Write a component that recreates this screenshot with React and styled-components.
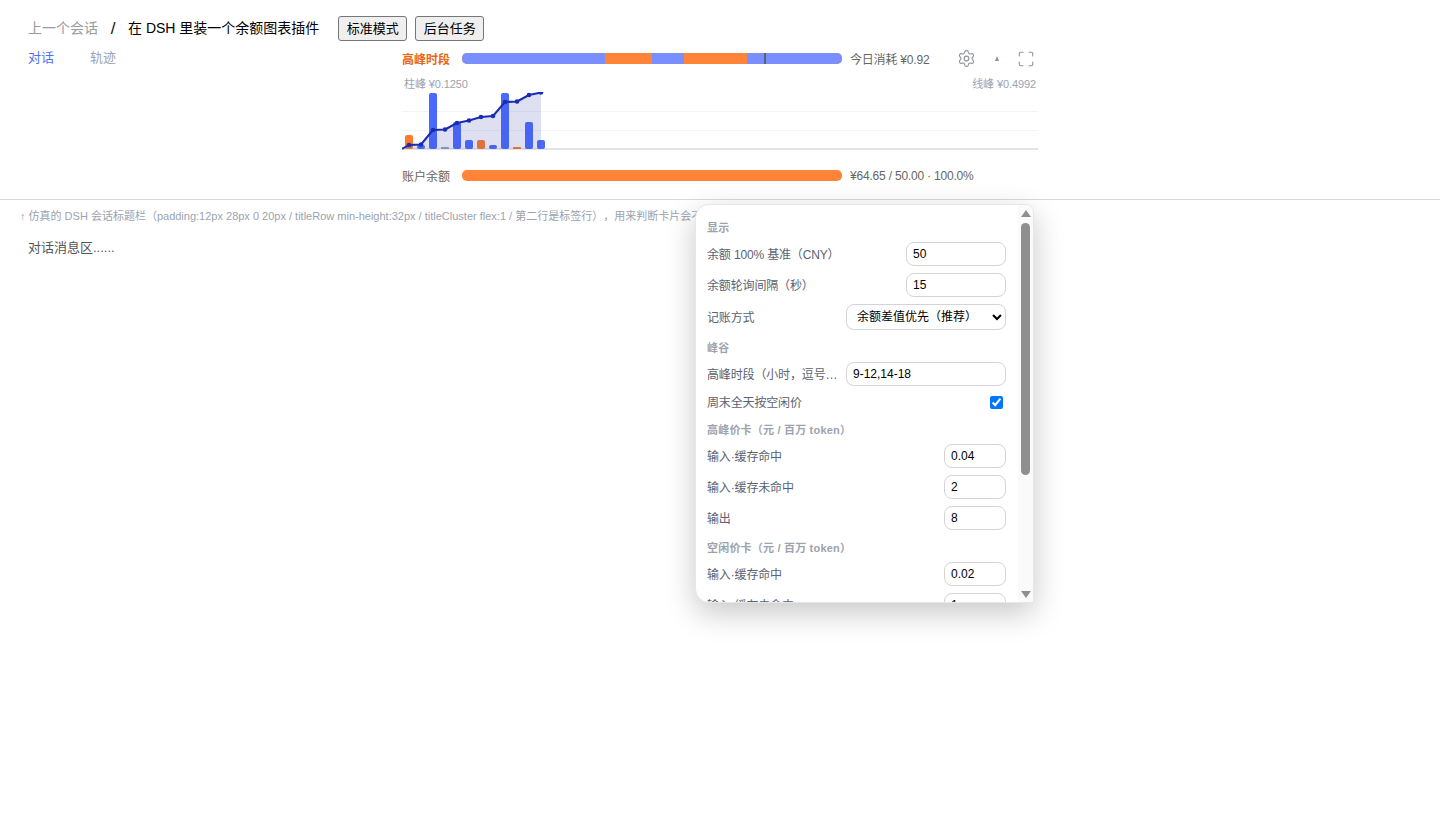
import React from 'react'
import styled, { createGlobalStyle } from 'styled-components'
import { Settings, Maximize } from 'lucide-react'

const GlobalStyle = createGlobalStyle`
  html, body, #root { margin: 0; padding: 0; min-height: 820px; background: #fff; }
  body {
    font-family: "Liberation Sans", "Noto Sans CJK SC", sans-serif;
    color: #444;
    text-spacing-trim: space-all;
  }
`

const Header = styled.header`
  padding: 16px 0 15px 28px;
  border-bottom: 1px solid #d9d9d9;
`

const TitleRow = styled.div`
  display: flex;
  align-items: center;
  height: 25px;
  font-size: 14px;
`

const Crumb = styled.span`
  padding-bottom: 3px;
  color: #9a9aa0;
`

const Slash = styled.span`
  width: 30px;
  font-size: 17px;
  line-height: 20px;
  text-align: center;
  color: #111;
`

const Title = styled.span`
  padding-bottom: 3px;
  margin-right: 19px;
  color: #000;
`

const ModeButton = styled.button`
  height: 25px;
  width: 69px;
  margin-right: 8px;
  padding: 0 0 2px;
  font: 13px "Liberation Sans", "Noto Sans CJK SC", sans-serif;
  color: #000;
  background: #efefef;
  border: 1px solid #767676;
  border-radius: 3px;
`

const SecondRow = styled.div`
  display: flex;
  align-items: flex-start;
  margin-top: 9px;
`

const Tabs = styled.nav`
  display: flex;
  gap: 36px;
  width: 374px;
  flex: none;
  font-size: 13px;
  line-height: 16px;
`

const Tab = styled.span`
  color: ${p => (p.$active ? '#4f6ef7' : '#9ca3af')};
`

const Card = styled.section`
  position: relative;
  width: 636px;
  flex: none;
  font-size: 12px;
`

const MeterRow = styled.div`
  display: flex;
  align-items: center;
  height: 17px;
`

const MeterLabel = styled.span`
  width: 60px;
  flex: none;
  color: ${p => (p.$peak ? '#e8660f' : '#666')};
  font-weight: ${p => (p.$peak ? 600 : 400)};
`

const Track = styled.div`
  position: relative;
  display: flex;
  width: 380px;
  height: 11px;
  flex: none;
  border-radius: 5px;
  overflow: hidden;
  background: #ff8438;
`

const Segment = styled.div`
  height: 100%;
  background: ${p => (p.$peak ? '#ff8438' : '#7a8fff')};
`

const NowMark = styled.div`
  position: absolute;
  top: 0;
  bottom: 0;
  width: 2px;
  background: #5c6270;
`

const MeterText = styled.span`
  margin-left: 8px;
  color: #666;
  letter-spacing: -0.2px;
  white-space: nowrap;
`

const Tools = styled.div`
  display: flex;
  align-items: center;
  gap: 18px;
  margin: 0 3px 0 auto;
  color: #8f949c;
`

const ToolIcon = styled.span`
  display: flex;
  align-items: center;
  justify-content: center;
`

const Caret = styled.span`
  width: 0;
  height: 0;
  margin-left: 1px;
  border-left: 2.5px solid transparent;
  border-right: 2.5px solid transparent;
  border-bottom: 5px solid #8a93a3;
`

const PeakLabels = styled.div`
  display: flex;
  justify-content: space-between;
  padding: 0 2px;
  margin-top: 10px;
  height: 15px;
  font-size: 11px;
  line-height: 15px;
  letter-spacing: -0.1px;
  color: #9ca3af;
`

const Chart = styled.svg`
  display: block;
  width: 636px;
  height: 59px;
  margin-bottom: 16px;
`

const Note = styled.p`
  margin: 0;
  padding: 9px 20px 0;
  font-size: 11px;
  line-height: 14px;
  color: #9ca3af;
  white-space: nowrap;
`

const Messages = styled.p`
  margin: 0;
  padding: 16px 28px;
  font-size: 13px;
  line-height: 18px;
  color: #555;
`

const Popover = styled.aside`
  position: absolute;
  top: 154px;
  left: 293px;
  z-index: 10;
  box-sizing: border-box;
  width: 339px;
  height: 399px;
  display: flex;
  background: #fff;
  border: 1px solid #e5e7eb;
  border-radius: 14px 8px 2px 14px;
  box-shadow: 0 10px 30px rgba(0, 0, 0, 0.22);
  overflow: hidden;
`

const PopoverBody = styled.div`
  flex: 1;
  min-width: 0;
  display: flex;
  flex-direction: column;
  gap: 7px;
  padding: 15px 12px 0 11px;
  overflow: hidden;
`

const ScrollRail = styled.div`
  flex: none;
  width: 15px;
  display: flex;
  flex-direction: column;
  align-items: center;
  background: #fafafa;
`

const ScrollArrow = styled.span`
  flex: none;
  width: 0;
  height: 0;
  margin: ${p => (p.$down ? 'auto 0 4px' : '5px 0 0')};
  border-left: 5px solid transparent;
  border-right: 5px solid transparent;
  border-${p => (p.$down ? 'top' : 'bottom')}: 7px solid #8f8f8f;
`

const ScrollThumb = styled.span`
  flex: none;
  width: 9px;
  height: 252px;
  margin-top: 6px;
  border-radius: 5px;
  background: #8f8f8f;
`

const SectionTitle = styled.h4`
  flex: none;
  margin: ${p => (p.$first ? 0 : '3px 0 0')};
  height: 15px;
  font-size: 11px;
  line-height: 17px;
  font-weight: 700;
  letter-spacing: 0.2px;
  color: #9ca3af;
`

const Field = styled.label`
  flex: none;
  display: flex;
  align-items: center;
  justify-content: space-between;
  gap: 6px;
  min-height: ${p => (p.$tight ? '19px' : '24px')};
  font-size: 12px;
  color: #5b6270;
`

const FieldName = styled.span`
  flex: 1;
  min-width: 0;
  padding-bottom: 2px;
  overflow: hidden;
  white-space: nowrap;
  text-overflow: ellipsis;
  letter-spacing: -0.15px;
`

const TextInput = styled.input`
  box-sizing: border-box;
  flex: none;
  width: ${p => p.$width}px;
  height: 24px;
  padding: 0 6px;
  font: 12px "Liberation Sans", "Noto Sans CJK SC", sans-serif;
  color: #000;
  background: #fff;
  border: 1px solid #d4d4d8;
  border-radius: 8px;
  outline: none;
`

const Select = styled.select`
  box-sizing: border-box;
  flex: none;
  width: 160px;
  height: 26px;
  padding: 0 6px;
  font: 12px "Liberation Sans", "Noto Sans CJK SC", sans-serif;
  color: #000;
  background: #fff;
  border: 1px solid #d4d4d8;
  border-radius: 8px;
  outline: none;
`

const Check = styled.input`
  flex: none;
  width: 13px;
  height: 13px;
  margin: 0 3px 0 0;
`

const segments = [
  { from: 0, to: 9, peak: false },
  { from: 9, to: 12, peak: true },
  { from: 12, to: 14, peak: false },
  { from: 14, to: 18, peak: true },
  { from: 18, to: 24, peak: false },
]

// bars: height in px, colour
const bars = [
  [14, '#ff7a2a'], [4, '#4a6aff'], [56, '#4a6aff'], [2, '#94a3c8'],
  [27, '#4a6aff'], [9, '#4a6aff'], [9, '#ff7a2a'], [4, '#4a6aff'],
  [56, '#4a6aff'], [2, '#ff7a2a'], [27, '#4a6aff'], [9, '#4a6aff'],
]

const line = [
  [0, 57], [7, 53], [19, 52.5], [31, 38], [43, 37.5], [55, 31], [67, 28.5],
  [79, 25], [91, 24], [103, 10], [115, 9.5], [127, 3], [139, 0.5],
]

const linePath = line.map(p => p.join(',')).join(' ')

function SpendChart() {
  return (
    <Chart viewBox="0 0 636 59">
      <line x1="0" x2="636" y1="19.5" y2="19.5" stroke="#f3f4f6" />
      <line x1="0" x2="636" y1="38.5" y2="38.5" stroke="#f3f4f6" />
      <line x1="0" x2="636" y1="57" y2="57" stroke="#e3e4e6" strokeWidth="2" />
      {bars.map(([h, color], i) => (
        <rect key={i} x={3 + i * 12} y={57 - h} width="8" height={h} rx={h > 2 ? 2 : 0.5} fill={color} />
      ))}
      <polygon points={`${linePath} 139,57`} fill="rgba(60,70,180,0.17)" />
      <polyline points={linePath} fill="none" stroke="#1a2db0" strokeWidth="2" strokeLinejoin="round" />
      {line.slice(1).map(([x, y]) => (
        <circle key={x} cx={x} cy={y} r="2.3" fill="#1a2db0" />
      ))}
    </Chart>
  )
}

function PriceRows({ values }) {
  const names = ['输入·缓存命中', '输入·缓存未命中', '输出']
  return names.map((name, i) => (
    <Field key={name}>
      <FieldName>{name}</FieldName>
      <TextInput $width={62} defaultValue={values[i]} />
    </Field>
  ))
}

function SettingsPopover() {
  return (
    <Popover>
      <PopoverBody>
        <SectionTitle $first>显示</SectionTitle>
        <Field>
          <FieldName>余额 100% 基准（CNY）</FieldName>
          <TextInput $width={100} defaultValue="50" />
        </Field>
        <Field>
          <FieldName>余额轮询间隔（秒）</FieldName>
          <TextInput $width={100} defaultValue="15" />
        </Field>
        <Field>
          <FieldName>记账方式</FieldName>
          <Select defaultValue="diff">
            <option value="diff">余额差值优先（推荐）</option>
          </Select>
        </Field>
        <SectionTitle>峰谷</SectionTitle>
        <Field>
          <FieldName>高峰时段（小时，逗号分隔）</FieldName>
          <TextInput $width={160} defaultValue="9-12,14-18" />
        </Field>
        <Field $tight>
          <FieldName>周末全天按空闲价</FieldName>
          <Check type="checkbox" defaultChecked />
        </Field>
        <SectionTitle>高峰价卡（元 / 百万 token）</SectionTitle>
        <PriceRows values={['0.04', '2', '8']} />
        <SectionTitle>空闲价卡（元 / 百万 token）</SectionTitle>
        <PriceRows values={['0.02', '1', '4']} />
      </PopoverBody>
      <ScrollRail>
        <ScrollArrow />
        <ScrollThumb />
        <ScrollArrow $down />
      </ScrollRail>
    </Popover>
  )
}

export default function App() {
  return (
    <>
      <GlobalStyle />
      <Header>
        <TitleRow>
          <Crumb>上一个会话</Crumb>
          <Slash>/</Slash>
          <Title>在 DSH 里装一个余额图表插件</Title>
          <ModeButton>标准模式</ModeButton>
          <ModeButton>后台任务</ModeButton>
        </TitleRow>
        <SecondRow>
          <Tabs>
            <Tab $active>对话</Tab>
            <Tab>轨迹</Tab>
          </Tabs>
          <Card>
            <MeterRow>
              <MeterLabel $peak>高峰时段</MeterLabel>
              <Track>
                {segments.map(s => (
                  <Segment key={s.from} $peak={s.peak} style={{ width: `${((s.to - s.from) / 24) * 100}%` }} />
                ))}
                <NowMark style={{ left: `${(19.07 / 24) * 100}%` }} />
              </Track>
              <MeterText>今日消耗 ¥0.92</MeterText>
              <Tools>
                <ToolIcon><Settings size={19} strokeWidth={1.4} /></ToolIcon>
                <Caret />
                <ToolIcon><Maximize size={18} strokeWidth={1.5} /></ToolIcon>
              </Tools>
            </MeterRow>
            <PeakLabels>
              <span>柱峰 ¥0.1250</span>
              <span>线峰 ¥0.4992</span>
            </PeakLabels>
            <SpendChart />
            <MeterRow>
              <MeterLabel>账户余额</MeterLabel>
              <Track />
              <MeterText>¥64.65 / 50.00 · 100.0%</MeterText>
            </MeterRow>
            <SettingsPopover />
          </Card>
        </SecondRow>
      </Header>
      <Note>↑ 仿真的 DSH 会话标题栏（padding:12px 28px 0 20px / titleRow min-height:32px / titleCluster flex:1 / 第二行是标签行），用来判断卡片会不会挤占标题</Note>
      <Messages>对话消息区......</Messages>
    </>
  )
}
